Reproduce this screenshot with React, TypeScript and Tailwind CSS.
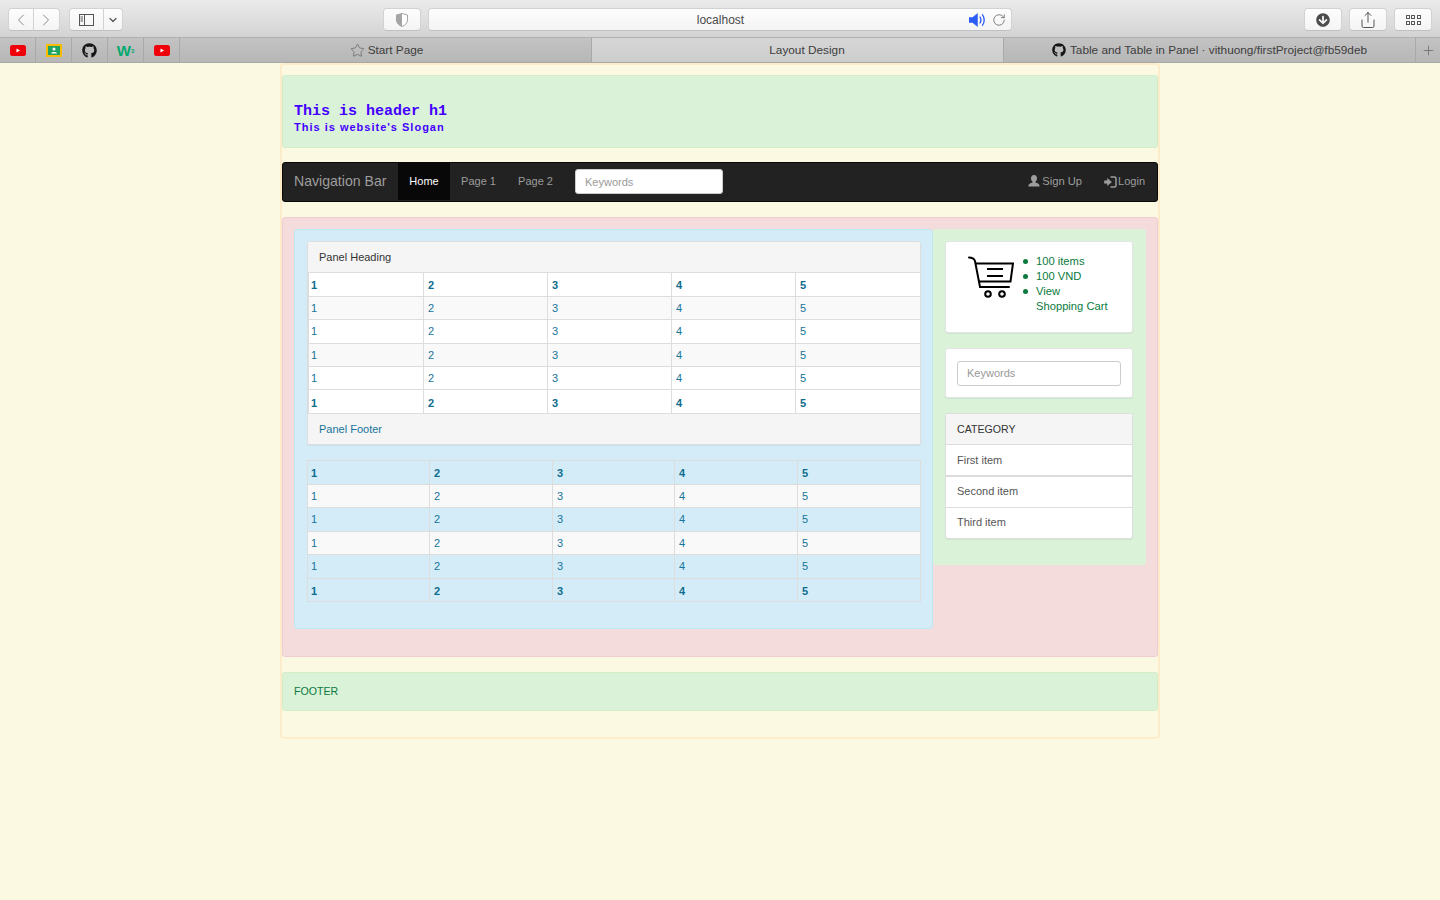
import React from 'react';
import { ChevronLeft, ChevronRight, ChevronDown, Star, Plus, RotateCw, Share } from 'lucide-react';
import { FaGithub, FaArrowCircleDown } from 'react-icons/fa';

const ToolButton = ({ className, children }: { className: string; children?: React.ReactNode }) => (
  <div className={`h-[23px] rounded-[4px] border border-[#d2d2d2] border-b-[#c0c0c0] bg-gradient-to-b from-[#fdfdfd] to-[#f4f4f4] flex items-center justify-center ${className}`}>
    {children}
  </div>
);

const YoutubeIcon = () => (
  <svg width="16" height="11" viewBox="0 0 16 11">
    <rect width="16" height="11" rx="2.5" fill="#f00008" />
    <path d="M6.5 3.5 L10 5.5 L6.5 7.5 Z" fill="#fff" />
  </svg>
);

const ClassroomIcon = () => (
  <svg width="16" height="13" viewBox="0 0 16 13">
    <rect width="16" height="13" fill="#f9bc05" />
    <rect x="2" y="2" width="12" height="9" fill="#1fa463" />
    <circle cx="8" cy="5" r="1.5" fill="#fff" />
    <path d="M5 9.5 C5 7.5 11 7.5 11 9.5 Z" fill="#fff" />
  </svg>
);

const SpeakerIcon = () => (
  <svg width="18" height="14" viewBox="0 0 18 14" fill="none" stroke="#2c5cf6">
    <path d="M0 4.5 H3.5 L8.5 0.5 V13.5 L3.5 9.5 H0 Z" fill="#2c5cf6" strokeWidth="0.5" />
    <path d="M11 4 C12.2 5.8 12.2 8.2 11 10 M13.5 1.8 C15.8 4.8 15.8 9.2 13.5 12.2" strokeWidth="1.3" strokeLinecap="round" />
  </svg>
);

const Favicon = ({ children }: { children: React.ReactNode }) => (
  <div className="w-[36px] h-full border-r border-[#a9a9a9] flex items-center justify-center">{children}</div>
);

const BrowserChrome = () => (
  <div className="h-[63px] shrink-0 flex flex-col border-b border-[#a8a8a8]">
    <div className="h-[38px] pt-[8px] pl-[8px] pr-[8px] flex border-b border-[#b0b0b0] bg-gradient-to-b from-[#ebebeb] to-[#d3d3d3]">
      <ToolButton className="w-[26px] rounded-r-none">
        <ChevronLeft size={20} strokeWidth={1.2} className="text-[#8a8a8a]" />
      </ToolButton>
      <ToolButton className="w-[26px] rounded-l-none border-l-0">
        <ChevronRight size={20} strokeWidth={1.2} className="text-[#8a8a8a]" />
      </ToolButton>
      <ToolButton className="w-[35px] ml-[9px] rounded-r-none">
        <svg width="15" height="12" viewBox="0 0 15 12" fill="none" stroke="#555" strokeWidth="1">
          <rect x="0.5" y="0.5" width="14" height="11" />
          <path d="M5.5 0.5 V11.5 M1.5 3 H4 M1.5 5 H4 M1.5 7 H4" />
        </svg>
      </ToolButton>
      <ToolButton className="w-[19px] rounded-l-none border-l-0">
        <ChevronDown size={12} strokeWidth={2.4} className="text-[#555]" />
      </ToolButton>
      <ToolButton className="w-[38px] ml-[260px]">
        <svg width="12" height="14" viewBox="0 0 12 14">
          <path d="M6 0.5 L11.5 2 V7 C11.5 10 9 12.5 6 13.5 C3 12.5 0.5 10 0.5 7 V2 Z" fill="#fff" stroke="#a5a5a5" />
          <path d="M6 0.5 V13.5 C3 12.5 0.5 10 0.5 7 V2 Z" fill="#a5a5a5" />
        </svg>
      </ToolButton>
      <ToolButton className="w-[585px] ml-[7px] !grid grid-cols-[1fr_auto_1fr]">
        <span />
        <span className="text-[12px] text-[#4a4a4a] ml-[1px]">localhost</span>
        <span className="flex items-center justify-end pr-[5px] gap-[5px]">
          <SpeakerIcon />
          <RotateCw size={14} strokeWidth={1.3} className="text-[#5f5f5f]" />
        </span>
      </ToolButton>
      <ToolButton className="w-[38px] ml-[292px]">
        <FaArrowCircleDown size={14} className="text-[#4c4c4c]" />
      </ToolButton>
      <ToolButton className="w-[38px] ml-[7px]">
        <Share size={18} strokeWidth={1.2} className="text-[#444]" />
      </ToolButton>
      <ToolButton className="w-[38px] ml-[7px]">
        <span className="grid grid-cols-3 gap-x-[1.5px] gap-y-[2px]">
          {[0, 1, 2, 3, 4, 5].map((i) => (
            <span key={i} className="w-[4px] h-[4px] border border-[#555] rounded-[0.5px]" />
          ))}
        </span>
      </ToolButton>
    </div>
    <div className="flex-1 flex text-[11.8px] text-[#3d3d3d] bg-gradient-to-b from-[#c3c3c3] to-[#b7b7b7]">
      <Favicon><YoutubeIcon /></Favicon>
      <Favicon><ClassroomIcon /></Favicon>
      <Favicon><FaGithub size={15} className="text-[#161616]" /></Favicon>
      <Favicon>
        <span className="text-[15px] leading-none font-bold text-[#04aa6d]">
          W<sup className="text-[6px]">3</sup>
        </span>
      </Favicon>
      <Favicon><YoutubeIcon /></Favicon>
      <div className="w-[412px] pl-[2px] flex items-center justify-center gap-[3px] border-r border-[#a9a9a9]">
        <Star size={15} strokeWidth={1} className="text-[#555]" />
        <span className="pt-[1px]">Start Page</span>
      </div>
      <div className="w-[411px] flex items-center justify-center bg-gradient-to-b from-[#d6d6d6] to-[#cdcdcd] pl-[19px]">
        <span className="pt-[1px]">Layout Design</span>
      </div>
      <div className="w-[413px] flex items-center justify-center gap-[4px] border-x border-[#a9a9a9]">
        <FaGithub size={14} className="text-[#161616]" />
        <span className="pt-[1px]">Table and Table in Panel · vithuong/firstProject@fb59deb</span>
      </div>
      <div className="flex-1 flex items-center justify-center">
        <Plus size={15} strokeWidth={1} className="text-[#555]" />
      </div>
    </div>
  </div>
);

type TableProps = { cols: string[]; heights: string[]; firstPad: string; lastRowPad: string };

const DataTable = ({ cols, heights, firstPad, lastRowPad }: TableProps) => (
  <table className="w-full table-fixed border-collapse text-[11px] text-[#17749a]">
    <colgroup>
      {cols.map((c, i) => (
        <col key={i} className={c} />
      ))}
    </colgroup>
    <tbody>
      {heights.map((h, r) => {
        const bold = r === 0 || r === 5;
        return (
          <tr key={r} className={`${h} ${r % 2 === 1 && r !== 5 ? 'bg-[#f9f9f9]' : ''}`}>
            {[1, 2, 3, 4, 5].map((n) => (
              <td
                key={n}
                className={`border border-[#dddddd] pr-[4px] pb-0 ${n === 1 ? firstPad : 'pl-[4px]'} ${bold ? 'font-bold text-[#0f6c8e]' : ''} ${r === 5 ? lastRowPad : r === 0 ? 'pt-[1px]' : 'pt-0'}`}
              >
                {n}
              </td>
            ))}
          </tr>
        );
      })}
    </tbody>
  </table>
);

const CartIcon = () => (
  <svg width="46" height="44" viewBox="0 0 46 44" fill="none" stroke="#000" strokeWidth="2" className="shrink-0">
    <path d="M1 1.5 C4 1.5 6 2.5 7 5 L12 31 H41" strokeLinecap="round" />
    <path d="M7.5 7.5 H45 L42.5 25.5 H11" />
    <path d="M19 13 H35 M19 20 H35" />
    <circle cx="20" cy="38" r="2.8" />
    <circle cx="34" cy="38" r="2.8" />
  </svg>
);

const CartLine = ({ children }: { children: React.ReactNode }) => (
  <li className="flex">
    <span className="w-[5px] h-[5px] mt-[5px] mr-[8px] rounded-full bg-[#0b7a3e] shrink-0" />
    <span>{children}</span>
  </li>
);

const KeywordsInput = ({ className }: { className: string }) => (
  <input
    placeholder="Keywords"
    readOnly
    className={`bg-white rounded-[3px] px-[9px] text-[11px] placeholder:text-[#999] outline-none ${className}`}
  />
);

const CategoryItem = ({ label, className }: { label: string; className: string }) => (
  <div className={`px-[11px] flex items-center text-[#555] ${className}`}>{label}</div>
);

export default function App() {
  return (
    <div className="min-h-[900px] flex flex-col bg-[#fcf9e3] text-[11px] text-[#333] [font-family:'Liberation_Sans',Arial,sans-serif]">
      <BrowserChrome />

      <div className="w-[880px] ml-[280px] h-[676px] border-2 border-[#fdecca] rounded-[4px] pt-[10px]">
        {/* header */}
        <div className="h-[73px] bg-[#d9f2d8] border border-[#d3edc9] rounded-[3px] px-[11px] pt-[27px] text-[#4400ff]">
          <h1 className="text-[15px] leading-[17px] font-bold [font-family:'Liberation_Mono',monospace]">This is header h1</h1>
          <p className="text-[11px] leading-[15px] font-bold tracking-[1px]">This is website's Slogan</p>
        </div>

        {/* navbar */}
        <div className="h-[40px] mt-[14px] bg-[#222222] border border-[#080808] rounded-[3px] flex text-[#9d9d9d]">
          <div className="w-[115px] pl-[11px] pb-[1px] flex items-center text-[14.1px]">Navigation Bar</div>
          <div className="w-[52px] h-[37px] bg-[#080808] text-white flex items-center justify-center">Home</div>
          <div className="w-[57px] h-[37px] flex items-center justify-center">Page 1</div>
          <div className="w-[57px] h-[37px] flex items-center justify-center">Page 2</div>
          <KeywordsInput className="w-[148px] h-[25px] mt-[6px] ml-[11px] pt-[1px] border border-[#cccccc]" />
          <div className="ml-auto flex items-center gap-[22px] pr-[12px] h-[37px]">
            <span className="flex items-center gap-[2px] text-[11.2px]">
              <svg width="12" height="12" viewBox="0 0 12 12" fill="#9d9d9d">
                <path d="M6 0 C8 0 9 1.6 9 3.4 C9 5 8.2 6.2 7.4 6.8 V7.6 C9.4 8.2 11.6 8.8 11.6 11.6 H0.4 C0.4 8.8 2.6 8.2 4.6 7.6 V6.8 C3.8 6.2 3 5 3 3.4 C3 1.6 4 0 6 0 Z" />
              </svg>
              Sign Up
            </span>
            <span className="flex items-center gap-[1px]">
              <svg width="13" height="12" viewBox="0 0 13 12" fill="none" stroke="#9d9d9d">
                <path d="M0.5 4.8 H3.5 V2.6 L7.5 6 L3.5 9.4 V7.2 H0.5 Z" fill="#9d9d9d" strokeWidth="0.6" />
                <path d="M6.5 1 H10.5 C11.6 1 12 1.6 12 2.5 V9.5 C12 10.4 11.6 11 10.5 11 H6.5" strokeWidth="1.5" />
              </svg>
              Login
            </span>
          </div>
        </div>

        {/* main */}
        <div className="h-[440px] mt-[15px] bg-[#f5dcdc] border border-[#f2ccd3] rounded-[3px] px-[11px] pt-[11px] flex items-start">
          <div className="w-[639px] h-[400px] bg-[#d3ecf8] border border-[#bce8f1] rounded-[3px] pl-[12px] pr-[11px] pt-[11px]">
            <div className="bg-white border border-[#dddddd] rounded-[3px] shadow-[0_1px_1px_rgba(0,0,0,0.05)] overflow-hidden">
              <div className="h-[30px] px-[11px] flex items-center bg-[#f5f5f5]">Panel Heading</div>
              <DataTable
                cols={['w-[115px]', 'w-[124px]', 'w-[124px]', 'w-[124px]', 'w-[125px]']}
                heights={['h-[24px]', 'h-[23px]', 'h-[24px]', 'h-[23px]', 'h-[23px]', 'h-[24px]']}
                firstPad="pl-[2px]"
                lastRowPad="pt-[4px]"
              />
              <div className="h-[30px] px-[11px] flex items-center bg-[#f5f5f5] text-[#17749a]">Panel Footer</div>
            </div>
            <div className="mt-[15px] mr-[1px]">
              <DataTable
                cols={['w-[122px]', 'w-[123px]', 'w-[122px]', 'w-[123px]', 'w-[123px]']}
                heights={['h-[24px]', 'h-[23px]', 'h-[24px]', 'h-[23px]', 'h-[24px]', 'h-[23px]']}
                firstPad="pl-[3px]"
                lastRowPad="pt-[2px]"
              />
            </div>
          </div>

          <div className="w-[213px] h-[336px] bg-[#d9f2d8] rounded-[3px] pl-[12px] pr-[13px] pt-[12px] flex flex-col gap-[15px]">
            <div className="h-[92px] bg-white border border-[#e4e4e4] rounded-[3px] shadow-[0_1px_1px_rgba(0,0,0,0.05)] pl-[22px] pt-[14px] flex">
              <CartIcon />
              <ul className="ml-[9px] text-[#0b7a3e] text-[11.2px] leading-[15px] mt-[-2px]">
                <CartLine>100 items</CartLine>
                <CartLine>100 VND</CartLine>
                <CartLine>View<br />Shopping Cart</CartLine>
              </ul>
            </div>
            <div className="h-[50px] bg-white border border-[#e4e4e4] rounded-[3px] shadow-[0_1px_1px_rgba(0,0,0,0.05)] px-[11px] pt-[12px]">
              <KeywordsInput className="w-[164px] h-[25px] pb-[2px] border border-[#cccccc]" />
            </div>
            <div className="bg-white border border-[#dddddd] rounded-[3px] shadow-[0_1px_1px_rgba(0,0,0,0.05)] overflow-hidden">
              <div className="h-[31px] px-[11px] pt-[1px] flex items-center bg-[#f5f5f5] border-b border-[#dddddd] text-[10.6px]">CATEGORY</div>
              <CategoryItem label="First item" className="h-[32px] border-b-2 border-[#dddddd]" />
              <CategoryItem label="Second item" className="h-[31px] pb-[2px] border-b border-[#dddddd]" />
              <CategoryItem label="Third item" className="h-[30px] pb-[1px]" />
            </div>
          </div>
        </div>

        {/* footer */}
        <div className="h-[39px] mt-[15px] bg-[#d9f2d8] border border-[#d3edc9] rounded-[3px] px-[11px] flex items-center text-[10.6px] text-[#0b7a3e]">FOOTER</div>
      </div>
    </div>
  );
}
